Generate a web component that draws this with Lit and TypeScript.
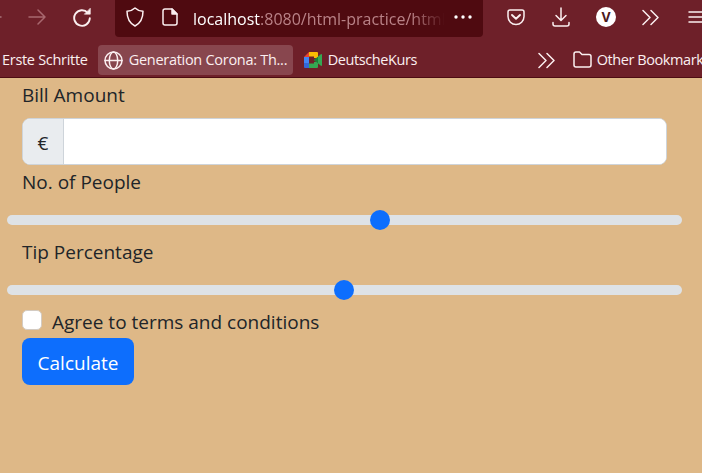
import { LitElement, html, css, svg } from "lit";
import { customElement, property } from "lit/decorators.js";

const chevrons = svg`<path d="M1 1.5 8 8.5 1 15.5M9 1.5 16 8.5 9 15.5"/>`;

@customElement("browser-bar")
class BrowserBar extends LitElement {
  static styles = css`
    :host { display: block; height: 78px; box-sizing: border-box; background: #6e2029; border-bottom: 1px solid #4d0c12; color: #fbeff0; overflow: hidden; font: 14.5px/20px "Open Sans", "Noto Sans", sans-serif; }
    .row { display: flex; align-items: center; white-space: nowrap; }
    .nav { height: 37px; }
    .marks { height: 30px; margin-top: 8px; }
    svg { display: block; flex: none; fill: none; stroke: #fbeff0; stroke-width: 1.5; stroke-linecap: round; stroke-linejoin: round; }
    .back { width: 4px; margin-right: 24px; stroke: #a8747a; }
    .forward { margin-right: 27px; stroke: #a8686f; }
    .reload { margin-right: 24px; }
    .address { display: flex; align-items: center; box-sizing: border-box; width: 368px; height: 37px; padding: 0 11px; background: #4f0a10; border-radius: 0 0 4px 4px; margin-right: 24px; flex: none; }
    .shield { margin-right: 18px; margin-bottom: 3px; }
    .page { margin-right: 15px; margin-bottom: 3px; }
    .url { width: 252px; overflow: hidden; margin-right: 9px; font-size: 16px; line-height: 24px; color: #b98287; -webkit-mask-image: linear-gradient(90deg, #000 218px, transparent 252px); mask-image: linear-gradient(90deg, #000 218px, transparent 252px); }
    .host { color: #fff; }
    .dots { fill: #fff; stroke: none; margin-bottom: 2px; }
    .tools svg { margin-bottom: 3px; }
    .pocket { margin-right: 27px; }
    .download { margin-right: 26px; }
    .account { display: grid; place-items: center; width: 20px; height: 20px; margin: 0 26px 3px 0; border-radius: 50%; background: #fff; color: #4c1a20; font: bold 14px/20px "Open Sans", sans-serif; flex: none; }
    .more { margin-right: 28px; }
    .first { width: 86px; margin: 0 10px 0 2px; letter-spacing: -0.3px; }
    .active { display: flex; align-items: center; box-sizing: border-box; width: 195px; height: 30px; padding: 0 5px 0 6px; border-radius: 4px; background: #88464e; flex: none; margin-right: 11px; }
    .globe { margin-right: 6px; }
    .active span { letter-spacing: -0.28px; }
    .meet { stroke: none; margin-right: 6px; }
    .course { width: 90px; margin-right: 120px; letter-spacing: -0.4px; flex: none; }
    .overflow { margin-right: 18px; }
    .folder { margin-right: 5px; margin-bottom: 2px; }
    .other { letter-spacing: -0.42px; }
  `;

  render() {
    return html`
      <div class="row nav tools">
        <svg class="back" width="4" height="18" viewBox="0 0 4 18"><path d="M-8 9H1"/></svg>
        <svg class="forward" width="18" height="18" viewBox="0 0 18 18"><path d="M1 9H17M10 2 17 9 10 16"/></svg>
        <svg class="reload" width="18" height="20" viewBox="0 0 18 20"><path stroke-width="1.9" d="M14.8 5.8A7.8 7.8 0 1 0 16.8 11.3"/><path d="M17.3 1.5V7.2H11.6Z" fill="#fbeff0" stroke-width=".6"/></svg>
        <div class="address">
          <svg class="shield" width="18" height="20" viewBox="0 0 18 20"><path d="M9 1C7 3 4 4 1 4.3C1 11 3 16 9 19C15 16 17 11 17 4.3C14 4 11 3 9 1Z"/></svg>
          <svg class="page" width="16" height="18" viewBox="0 0 16 18"><path d="M3 1H10L15 6V15Q15 17 13 17H3Q1 17 1 15V3Q1 1 3 1Z"/><path d="M10 1V6H15Z" fill="#fbeff0"/></svg>
          <div class="url"><span class="host">localhost</span>:8080/html-practice/html</div>
          <svg class="dots" width="18" height="4" viewBox="0 0 18 4"><circle cx="2" cy="2" r="1.7"/><circle cx="9" cy="2" r="1.7"/><circle cx="16" cy="2" r="1.7"/></svg>
        </div>
        <svg class="pocket" width="18" height="18" viewBox="0 0 18 18"><path d="M3 2H15Q17 2 17 4V8.5A8 8 0 0 1 1 8.5V4Q1 2 3 2Z"/><path d="M5 7 9 10.7 13 7" stroke-width="1.9"/></svg>
        <svg class="download" width="18" height="20" viewBox="0 0 18 20"><path d="M9 1V13M4 8.5 9 13.5 14 8.5M1 15.5V17Q1 19 3 19H15Q17 19 17 17V15.5"/></svg>
        <span class="account">V</span>
        <svg class="more" width="18" height="17" viewBox="0 0 18 17">${chevrons}</svg>
        <svg width="18" height="14" viewBox="0 0 18 14"><path d="M1 2H17M1 7H17M1 12H17"/></svg>
      </div>
      <div class="row marks">
        <span class="first">Erste Schritte</span>
        <div class="active">
          <svg class="globe" width="19" height="19" viewBox="0 0 19 19"><circle cx="9.5" cy="9.5" r="8.5"/><ellipse cx="9.5" cy="9.5" rx="4.2" ry="8.5"/><path d="M1 9.5H18"/></svg>
          <span>Generation Corona: Th...</span>
        </div>
        <svg class="meet" width="18" height="16" viewBox="0 0 18 16">
          <path d="M0 5 5 0V5Z" fill="#ea4335"/><path d="M5 0H13Q14 0 14 1V6H10V4.5H5Z" fill="#fbbc04"/>
          <path d="M0 5H5V11H0Z" fill="#4285f4"/><path d="M0 11H5V16H1Q0 16 0 15Z" fill="#3367d6"/>
          <path d="M5 11.5H10V10H14V15Q14 16 13 16H5Z" fill="#34a853"/><path d="M10 8 16.5 2.5Q18 1.5 18 3V13Q18 14.5 16.5 13.5Z" fill="#34a853"/><path d="M10 8 14 4.7V11.3Z" fill="#188038"/>
        </svg>
        <span class="course">DeutscheKurs</span>
        <svg class="overflow" width="17" height="17" viewBox="0 0 17 17">${chevrons}</svg>
        <svg class="folder" width="19" height="17" viewBox="0 0 19 17"><path d="M3 1H6.5L9 3.5H16Q18 3.5 18 5.5V14Q18 16 16 16H3Q1 16 1 14V3Q1 1 3 1Z"/></svg>
        <span class="other">Other Bookmarks</span>
      </div>`;
  }
}

@customElement("range-slider")
class RangeSlider extends LitElement {
  @property({ type: Number }) value = 50;

  static styles = css`
    :host { display: block; height: 38px; padding-top: 18px; box-sizing: border-box; }
    .track { position: relative; height: 10px; border-radius: 5px; background: #dee2e6; }
    .rail { position: absolute; inset: 0 20px 0 0; }
    .thumb { position: absolute; top: -5px; width: 20px; height: 20px; border-radius: 50%; background: #0d6efd; }
  `;

  render() {
    return html`<div class="track"><div class="rail"><div class="thumb" style="left:${this.value}%"></div></div></div>`;
  }
}

@customElement("app-root")
class AppRoot extends LitElement {
  static styles = css`
    :host { display: block; height: 473px; overflow: hidden; background: #deb887; color: #212529; font: 19px/30px "Open Sans", "Noto Sans", sans-serif; }
    form { display: block; padding: 2px 20px 0 7px; }
    .field { margin: 0 15px; white-space: nowrap; }
    .people, .tip { margin-top: 2px; }
    .group { display: flex; box-sizing: border-box; height: 47px; margin: 8px 15px 0; border: 1px solid #ced4da; border-radius: 8px; overflow: hidden; background: #fff; }
    .currency { display: grid; place-items: center; width: 41px; padding-top: 2px; box-sizing: border-box; background: #e9ecef; border-right: 1px solid #ced4da; flex: none; }
    input { min-width: 0; flex: 1; border: 0; padding: 0 15px; outline: 0; font: inherit; background: #fff; }
    .agree { display: flex; margin: 2px 15px 0; height: 31px; white-space: nowrap; }
    .box { box-sizing: border-box; width: 20px; height: 20px; margin: 3px 10px 0 0; border: 1px solid #d3cbc2; border-radius: 5px; background: #fff; flex: none; }
    button { display: block; width: 112px; height: 47px; margin: 0 15px; padding: 3px 0 0; border: 0; border-radius: 8px; background: #0d6efd; color: #fff; font: inherit; }
  `;

  render() {
    return html`
      <browser-bar></browser-bar>
      <form>
        <div class="field bill"><span>Bill Amount</span></div>
        <div class="group"><span class="currency">€</span><input type="text" aria-label="Bill Amount"></div>
        <div class="field people"><span>No. of People</span></div>
        <range-slider .value=${55.4}></range-slider>
        <div class="field tip"><span>Tip Percentage</span></div>
        <range-slider .value=${49.9}></range-slider>
        <div class="agree"><span class="box"></span><span class="terms">Agree to terms and conditions</span></div>
        <button type="button">Calculate</button>
      </form>`;
  }
}
